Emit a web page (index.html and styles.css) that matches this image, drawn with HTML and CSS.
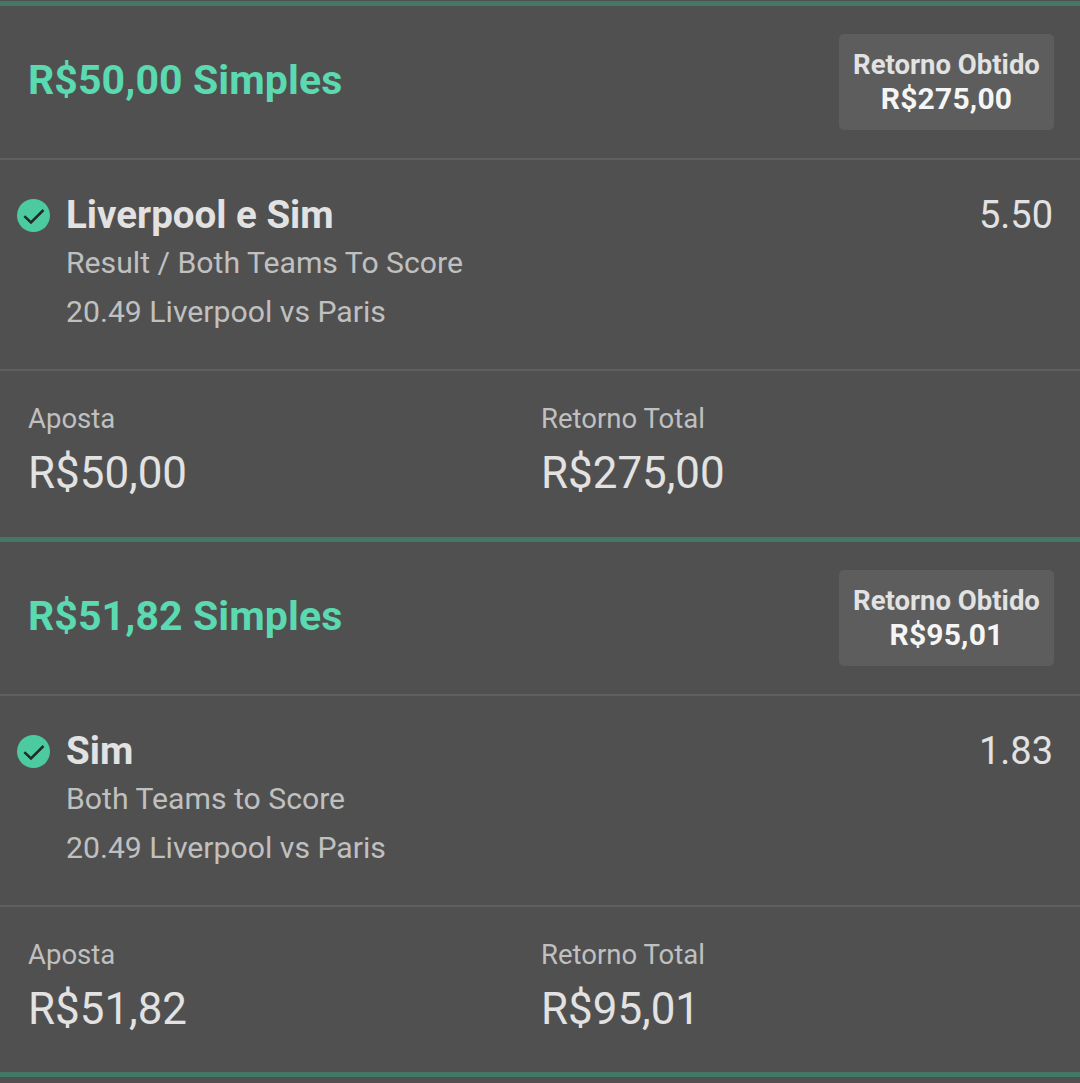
FILE: index.html
```
<!DOCTYPE html>
<html lang="pt-BR">
<head>
<meta charset="UTF-8">
<meta name="viewport" content="width=device-width, initial-scale=1.0">
<title>Minhas Apostas</title>
<link rel="stylesheet" href="styles.css">
</head>
<body>

<div class="aposta">
  <div class="topo">
    <h2>R$50,00 Simples</h2>
    <div class="retorno-btn">
      <span>Retorno Obtido</span>
      <strong>R$275,00</strong>
    </div>
  </div>
  <div class="selecao">
    <svg class="check" viewBox="0 0 34 34">
      <circle cx="17.5" cy="17.5" r="16.5" fill="#4dcba0"/>
      <path d="M8.3 18.2l6.7 6.3L27.5 12" fill="none" stroke="#222b28" stroke-width="2.5"/>
    </svg>
    <div class="info">
      <h3>Liverpool e Sim</h3>
      <p>Result / Both Teams To Score</p>
      <p>20.49 Liverpool vs Paris</p>
    </div>
    <span class="odd">5.50</span>
  </div>
  <div class="valores">
    <div class="valor">
      <span>Aposta</span>
      <p>R$50,00</p>
    </div>
    <div class="valor">
      <span>Retorno Total</span>
      <p>R$275,00</p>
    </div>
  </div>
</div>

<div class="aposta">
  <div class="topo">
    <h2>R$51,82 Simples</h2>
    <div class="retorno-btn">
      <span>Retorno Obtido</span>
      <strong>R$95,01</strong>
    </div>
  </div>
  <div class="selecao">
    <svg class="check" viewBox="0 0 34 34">
      <circle cx="17.5" cy="17.5" r="16.5" fill="#4dcba0"/>
      <path d="M8.3 18.2l6.7 6.3L27.5 12" fill="none" stroke="#222b28" stroke-width="2.5"/>
    </svg>
    <div class="info">
      <h3>Sim</h3>
      <p>Both Teams to Score</p>
      <p>20.49 Liverpool vs Paris</p>
    </div>
    <span class="odd">1.83</span>
  </div>
  <div class="valores">
    <div class="valor">
      <span>Aposta</span>
      <p>R$51,82</p>
    </div>
    <div class="valor">
      <span>Retorno Total</span>
      <p>R$95,01</p>
    </div>
  </div>
</div>

<div class="fim"></div>

</body>
</html>
```
FILE: styles.css
```
* {
  padding: 0;
  margin: 0;
  box-sizing: border-box;
  font-family: Roboto, sans-serif;
}

body {
  background-color: #505050;
  color: #e2e2e2;
  height: 1083px;
  padding-top: 1px;
  overflow: hidden;
}

.aposta {
  height: 536px;
  border-top: 5px solid #417866;
}

.topo {
  height: 154px;
  padding: 28px 26px 0 28px;
  display: flex;
  justify-content: space-between;
  align-items: flex-start;
  border-bottom: 2px solid #5f5f5f;
}

.topo h2 {
  padding-top: 22px;
  font-size: 41px;
  line-height: 48px;
  letter-spacing: 0.1px;
  font-weight: bold;
  color: #5bd9b0;
}

.retorno-btn {
  width: 215px;
  height: 96px;
  padding-top: 14px;
  border-radius: 5px;
  background-color: #5d5d5d;
  text-align: center;
}

.retorno-btn span,
.retorno-btn strong {
  display: block;
  line-height: 34px;
}

.retorno-btn span {
  font-size: 27.5px;
  font-weight: bold;
}

.retorno-btn strong {
  font-size: 30px;
  letter-spacing: 0.2px;
  color: #f5f5f5;
}

.selecao {
  height: 211px;
  padding: 31px 27px 0 16px;
  display: flex;
  border-bottom: 2px solid #5f5f5f;
}

.check {
  width: 34px;
  height: 34px;
  margin: 7px 16px 0 0;
}

.info {
  flex: 1;
}

.info h3 {
  font-size: 38.5px;
  line-height: 47px;
}

.info p {
  font-size: 30.2px;
  line-height: 49px;
  color: #c0c0c0;
}

.odd {
  font-size: 38px;
  line-height: 48px;
}

.valores {
  padding: 30px 28px 0;
  display: grid;
  grid-template-columns: 513px 1fr;
}

.valor span {
  display: block;
  font-size: 27.5px;
  line-height: 36px;
  color: #c0c0c0;
}

.valor p {
  font-size: 43.9px;
  line-height: 72px;
}

.fim {
  margin-top: -1px;
  border-top: 5px solid #417866;
}
```
